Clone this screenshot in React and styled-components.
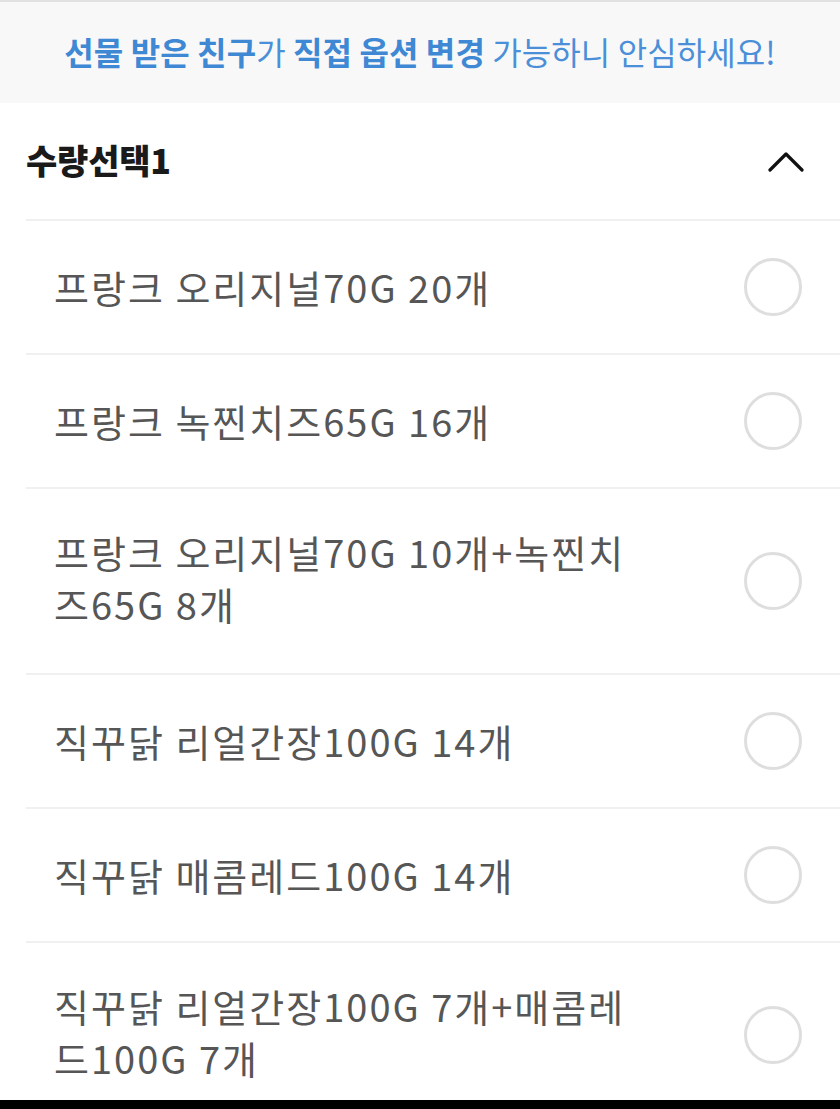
import React from "react";
import styled, { createGlobalStyle } from "styled-components";

const Global = createGlobalStyle`
  html, body { margin: 0; padding: 0; background: #fff; }
  body { font-family: "Noto Sans CJK KR", "Noto Sans", sans-serif; }
  #root { height: 1109px; }
`;

const Page = styled.div`
  height: 1109px;
  display: flex;
  flex-direction: column;
  overflow: hidden;
  background: #fff;
`;

const Banner = styled.div`
  height: 103px;
  box-sizing: border-box;
  background: #f8f8f8;
  border-top: 2px solid #e2e2e2;
  display: flex;
  align-items: center;
  justify-content: center;
  padding-bottom: 4px;
  font-size: 32px;
  letter-spacing: 0.1px;
  color: #4a8fd8;
  flex-shrink: 0;
  white-space: nowrap;
`;

const Strong = styled.b`
  font-weight: 700;
  color: #3f88d4;
`;

const Section = styled.div`
  flex: 1;
  overflow: hidden;
  padding-left: 26px;
`;

const Header = styled.div`
  height: 118px;
  display: flex;
  align-items: center;
  justify-content: space-between;
  padding-right: 36px;
  border-bottom: 2px solid #f0f0f0;
  box-sizing: border-box;
`;

const Title = styled.h2`
  margin: 0;
  font-size: 34px;
  font-weight: 800;
  color: #1a1a1a;
  letter-spacing: -0.2px;
  padding-bottom: 3px;
`;

const Row = styled.div`
  min-height: ${(p) => (p.$multi ? "186px" : "134px")};
  box-sizing: border-box;
  display: flex;
  align-items: center;
  justify-content: space-between;
  padding: 0 38px 0 28px;
  border-bottom: 2px solid #f0f0f0;
`;

const Label = styled.div`
  font-size: 38px;
  line-height: 52px;
  color: #565656;
  letter-spacing: 2px;
  white-space: nowrap;
  margin-top: ${(p) => (p.$multi ? "-6px" : "0")};
`;

const Radio = styled.span`
  width: 52px;
  height: 52px;
  border-radius: 50%;
  border: 3px solid #dedede;
  flex-shrink: 0;
`;

const BottomBar = styled.div`
  height: 9px;
  background: #000;
  flex-shrink: 0;
`;

const Chevron = () => (
  <svg width="36" height="24" viewBox="0 0 36 24" fill="none">
    <path d="M2 21 L18 5 L34 21" stroke="#111" strokeWidth="3.2" strokeLinecap="round" strokeLinejoin="round" />
  </svg>
);

const items = [
  ["프랑크 오리지널70G 20개"],
  ["프랑크 녹찐치즈65G 16개"],
  ["프랑크 오리지널70G 10개+녹찐치", "즈65G 8개"],
  ["직꾸닭 리얼간장100G 14개"],
  ["직꾸닭 매콤레드100G 14개"],
  ["직꾸닭 리얼간장100G 7개+매콤레", "드100G 7개"],
];

export default function App() {
  return (
    <Page>
      <Global />
      <Banner>
        <span>
          <Strong>선물 받은 친구</Strong>가 <Strong>직접 옵션 변경</Strong> 가능하니 안심하세요!
        </span>
      </Banner>
      <Section>
        <Header>
          <Title>수량선택1</Title>
          <Chevron />
        </Header>
        {items.map((lines, i) => (
          <Row key={i} $multi={lines.length > 1}>
            <Label $multi={lines.length > 1}>
              {lines.map((l, j) => (
                <div key={j}>{l}</div>
              ))}
            </Label>
            <Radio />
          </Row>
        ))}
      </Section>
      <BottomBar />
    </Page>
  );
}
